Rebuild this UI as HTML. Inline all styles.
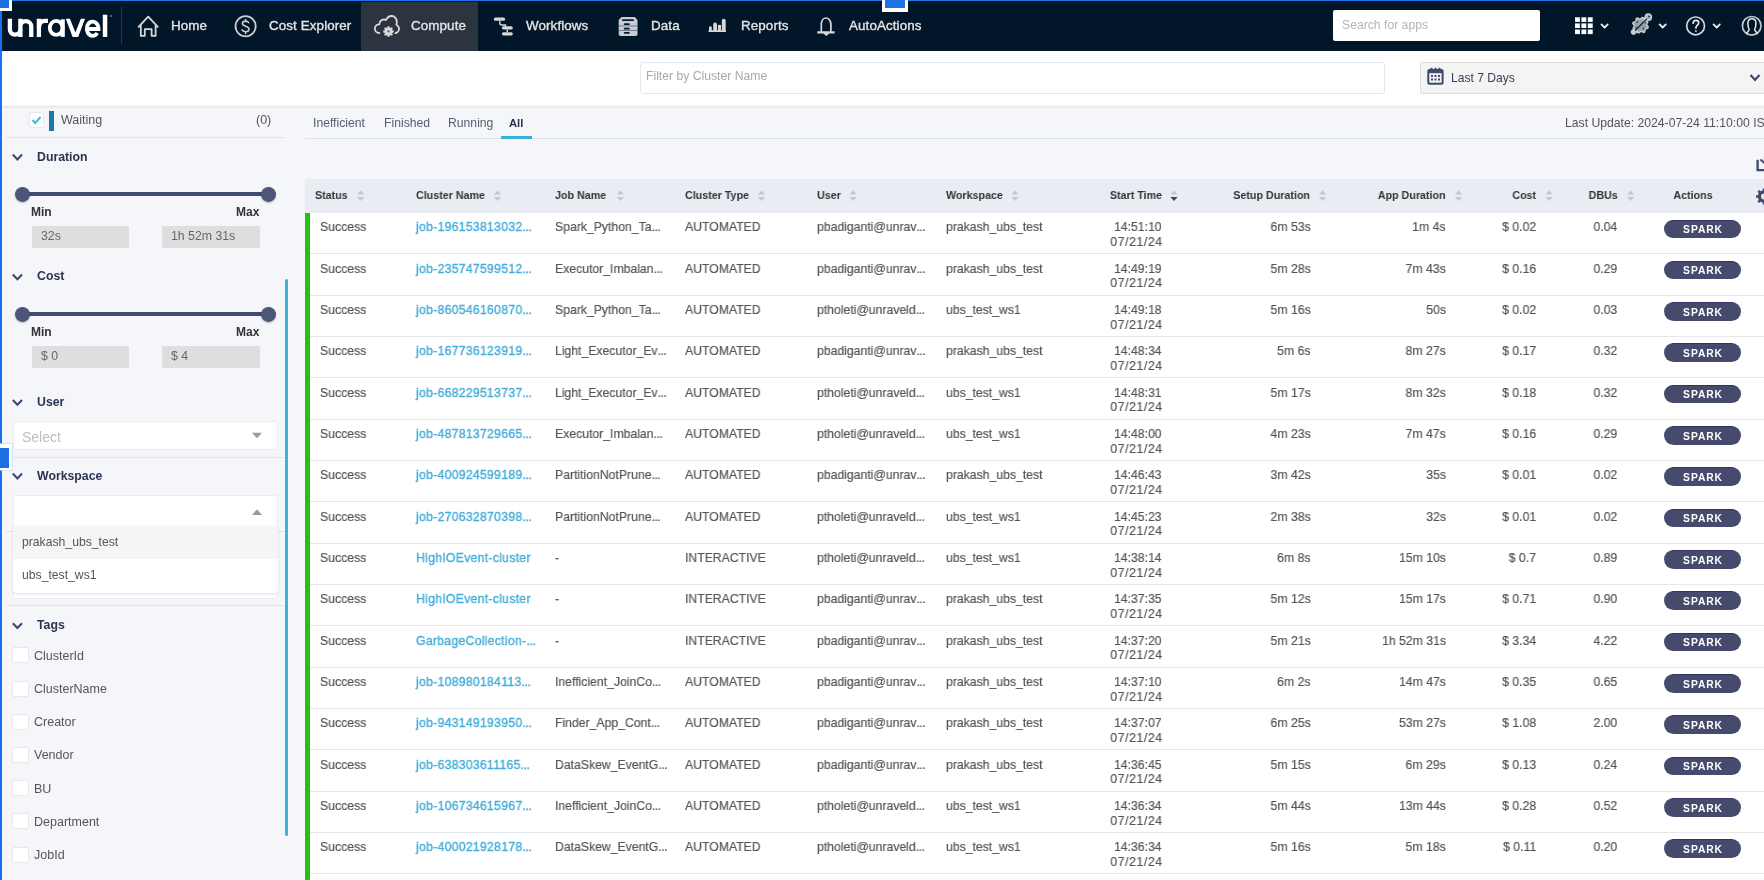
<!DOCTYPE html>
<html><head><meta charset="utf-8">
<style>
html,body{margin:0;padding:0;}
body{width:1764px;height:880px;overflow:hidden;position:relative;background:#f4f6fa;font-family:"Liberation Sans", sans-serif;}
.t{position:absolute;white-space:nowrap;line-height:20px;will-change:transform;}
.r{position:absolute;}
svg{position:absolute;overflow:visible;}
</style></head><body>
<div class="r" style="left:0.00px;top:0.00px;width:1764.00px;height:50.60px;background:#021629;"></div>
<div class="r" style="left:361.00px;top:1.50px;width:117.00px;height:49.10px;background:#2c3440;"></div>
<div class="r" style="left:0.00px;top:0.00px;width:1764.00px;height:1.20px;background:#1e74ea;"></div>
<svg style="left:0;top:0" width="130" height="51"><g fill="none" stroke="#fff" stroke-width="4.3">
<path d="M9.9,18.7 V29.5 A5.2,5.2 0 0 0 20.3,29.5"/>
<path d="M20.4,18.7 V36.9 M20.4,26.5 A5.42,5.42 0 0 1 31.25,26.5 V36.9"/>
<path d="M38.9,18.7 V36.9 M38.9,28.5 C38.9,23.3 41.3,20.9 45,20.9 H48"/>
</g>
<g fill="none" stroke="#fff" stroke-width="3.8">
<ellipse cx="56.2" cy="27.9" rx="6.4" ry="7"/>
<path d="M86.6,29 H98.5 A5.85,7.15 0 1 0 97.3,33.1"/>
</g>
<g fill="#fff">
<rect x="60.6" y="19.3" width="4.2" height="17.6"/>
<polygon points="65.8,18.8 69.9,18.8 75.4,32.6 80.9,18.8 85,18.8 78.2,36.9 72.6,36.9"/>
<rect x="102.8" y="14.7" width="4.5" height="22.2"/>
</g><circle cx="111" cy="16" r="0.9" fill="#7a8899"/></svg>
<div class="r" style="left:121.00px;top:7.00px;width:1.00px;height:37.00px;background:#2a3647;"></div>
<div class="t" style="left:171.40px;top:15.56px;font-size:13.4px;color:#e4e4e4;font-weight:400;-webkit-text-stroke:0.35px #e4e4e4;letter-spacing:0.1px;">Home</div>
<div class="t" style="left:269.00px;top:15.56px;font-size:13.4px;color:#e4e4e4;font-weight:400;-webkit-text-stroke:0.35px #e4e4e4;letter-spacing:0.1px;">Cost Explorer</div>
<div class="t" style="left:410.70px;top:15.56px;font-size:13.4px;color:#e4e4e4;font-weight:400;-webkit-text-stroke:0.35px #e4e4e4;letter-spacing:0.1px;">Compute</div>
<div class="t" style="left:526.40px;top:15.56px;font-size:13.4px;color:#e4e4e4;font-weight:400;-webkit-text-stroke:0.35px #e4e4e4;letter-spacing:0.1px;">Workflows</div>
<div class="t" style="left:651.00px;top:15.56px;font-size:13.4px;color:#e4e4e4;font-weight:400;-webkit-text-stroke:0.35px #e4e4e4;letter-spacing:0.1px;">Data</div>
<div class="t" style="left:740.60px;top:15.56px;font-size:13.4px;color:#e4e4e4;font-weight:400;-webkit-text-stroke:0.35px #e4e4e4;letter-spacing:0.1px;">Reports</div>
<div class="t" style="left:849.00px;top:15.56px;font-size:13.4px;color:#e4e4e4;font-weight:400;-webkit-text-stroke:0.35px #e4e4e4;letter-spacing:0.1px;">AutoActions</div>
<svg style="left:0;top:0" width="1764" height="51"><g fill="none" stroke="#d8d8d8" stroke-width="1.8" stroke-linejoin="round" stroke-linecap="round">
<path d="M138.6,26.8 L148.2,16.6 L157.8,26.8 M140.8,24.6 V35.8 H144.8 V29.2 H151.6 V35.8 H155.6 V24.6"/>
<circle cx="245.6" cy="26.2" r="10.1" stroke="#c8ccd2"/>
<path d="M248.6,22.6 C247.9,21.5 246.9,21.1 245.6,21.1 C243.7,21.1 242.4,22.1 242.4,23.6 C242.4,26.9 249,25.5 249,29 C249,30.6 247.5,31.7 245.6,31.7 C243.9,31.7 242.7,31 242.1,29.8 M245.6,19.6 V21.1 M245.6,31.7 V33.6" stroke="#c8ccd2" stroke-width="1.6"/>
<path d="M379.3,33 C376.6,33 374.9,31 374.9,28.6 C374.9,26 377,24.2 379.4,24.4 C379.3,21.6 381.3,19.5 383.8,19.5 C384.6,19.5 385.4,19.7 386,20.1 C387,17.6 389.2,16 391.5,16 C394.7,16 397,18.7 396.8,22.4 C396.8,23.2 396.6,24 396.3,24.7 C398,25.5 399,27 399,28.8 C399,31.1 397.2,33 394.8,33"/>
</g>
<g fill="#d8d8d8" stroke="#2c3440" stroke-width="1.2">
<path d="M387.2,25.6 h2.6 l0.5,1.6 l1.5,-0.8 l1.8,1.8 l-0.8,1.5 l1.6,0.5 v2.6 l-1.6,0.5 l0.8,1.5 l-1.8,1.8 l-1.5,-0.8 l-0.5,1.6 h-2.6 l-0.5,-1.6 l-1.5,0.8 l-1.8,-1.8 l0.8,-1.5 l-1.6,-0.5 v-2.6 l1.6,-0.5 l-0.8,-1.5 l1.8,-1.8 l1.5,0.8 z"/>
</g>
<circle cx="388.5" cy="31.3" r="1.1" fill="#555"/>
<g fill="none" stroke="#d8d8d8" stroke-width="3.3" stroke-linecap="round">
<path d="M495.5,19.2 H503.5 M503.5,27.8 H511.2 M503.5,33.8 H511.2"/>
</g>
<g fill="none" stroke="#d8d8d8" stroke-width="1.4">
<path d="M499.8,21 V23 C499.8,24.3 500.8,25 502,25 H505.5 V27 M507.3,29.5 V32"/>
</g>
<g fill="#c9ccd2">
<path d="M621.5,16.9 H634.7 L637.5,20 V34.3 C637.5,35.3 636.7,35.9 635.7,35.9 H620.5 C619.5,35.9 618.7,35.3 618.7,34.3 V20 Z"/>
</g>
<g fill="#0a1a2c">
<rect x="622" y="19.3" width="12" height="1.8" rx="0.9"/>
<rect x="623.8" y="23.3" width="6" height="1.7" rx="0.85"/>
<rect x="623.8" y="27.8" width="6" height="1.7" rx="0.85"/>
<rect x="623.8" y="32" width="6" height="1.7" rx="0.85"/>
</g>
<g fill="#505a68"><rect x="618.7" y="25.6" width="18.8" height="0.7"/><rect x="618.7" y="30.2" width="18.8" height="0.7"/></g>
<g fill="#d8d8d8">
<rect x="708.5" y="30.2" width="17.5" height="1.8" rx="0.5"/>
<rect x="709" y="26.3" width="2.8" height="5" rx="1.4"/>
<rect x="713.2" y="22.5" width="3.8" height="9" rx="1.9"/>
<rect x="717.9" y="24.9" width="3.1" height="6"/>
<rect x="721.8" y="18.8" width="3.9" height="12.5" rx="1.9"/>
</g>
<g fill="none" stroke="#d8d8d8" stroke-width="1.7" stroke-linejoin="round">
<path d="M821.3,32 V24.5 C821.3,20.3 823.6,18 826,18 C828.4,18 830.9,20.3 830.9,24.5 V32"/>
</g>
<g fill="#d8d8d8">
<path d="M817.3,31.2 H834.6 V33.5 H829.2 L826.3,35.9 L823.4,33.5 H817.3 Z"/>
</g>
</svg>
<div class="r" style="left:1333.20px;top:9.80px;width:207.20px;height:31.00px;background:#fff;border-radius:2px;"></div>
<div class="t" style="left:1342.40px;top:15.07px;font-size:12.2px;color:#b5b5b5;font-weight:400;">Search for apps</div>
<svg style="left:0;top:0" width="1764" height="51"><g fill="#fff"><rect x="1575.0" y="17.3" width="4.9" height="4.6"/><rect x="1581.4" y="17.3" width="4.9" height="4.6"/><rect x="1587.8" y="17.3" width="4.9" height="4.6"/><rect x="1575.0" y="23.4" width="4.9" height="4.6"/><rect x="1581.4" y="23.4" width="4.9" height="4.6"/><rect x="1587.8" y="23.4" width="4.9" height="4.6"/><rect x="1575.0" y="29.5" width="4.9" height="4.6"/><rect x="1581.4" y="29.5" width="4.9" height="4.6"/><rect x="1587.8" y="29.5" width="4.9" height="4.6"/></g>
<g fill="none" stroke="#e8e8e8" stroke-width="1.9" stroke-linecap="round" stroke-linejoin="round">
<path d="M1601.5,24.4 L1604.6,27.5 L1607.7,24.4"/>
<path d="M1659.6,24.4 L1662.7,27.5 L1665.8,24.4"/>
<path d="M1713.6,24.4 L1716.7,27.5 L1719.8,24.4"/>
<circle cx="1695.6" cy="25.9" r="8.9" stroke="#d4d7dc" stroke-width="1.7"/>
<path d="M1693.2,23.2 C1693.2,21.3 1694.4,20.3 1695.9,20.3 C1697.5,20.3 1698.7,21.3 1698.7,22.8 C1698.7,25 1695.9,25.3 1695.9,28" stroke-width="1.7"/>
<circle cx="1751.7" cy="25.8" r="9.3" stroke="#c4c8cf" stroke-width="1.7"/>
<path d="M1746.6,33.6 C1747.3,31.8 1749.2,30.6 1749.2,29.3 C1748,27.8 1747.9,25.5 1747.9,23.2 C1747.9,20.2 1749.6,18.7 1751.9,18.7 C1754.2,18.7 1755.9,20.2 1755.9,23.2 C1755.9,25.5 1755.8,27.8 1754.6,29.3 C1754.6,30.6 1756.5,31.8 1757.2,33.6" stroke-width="1.5"/>
</g>
<circle cx="1695.9" cy="30.9" r="1" fill="#c8ccd2"/>
<path d="M1633.5,32 L1648.5,17" stroke="#b9bdc6" stroke-width="5.5" stroke-linecap="round"/>
<path d="M1648.24,26.77 L1647.79,28.25 L1645.73,28.72 L1644.94,29.67 L1644.86,31.78 L1643.50,32.51 L1641.71,31.38 L1640.48,31.50 L1638.93,32.94 L1637.45,32.49 L1636.98,30.43 L1636.03,29.64 L1633.92,29.56 L1633.19,28.20 L1634.32,26.41 L1634.20,25.18 L1632.76,23.63 L1633.21,22.15 L1635.27,21.68 L1636.06,20.73 L1636.14,18.62 L1637.50,17.89 L1639.29,19.02 L1640.52,18.90 L1642.07,17.46 L1643.55,17.91 L1644.02,19.97 L1644.97,20.76 L1647.08,20.84 L1647.81,22.20 L1646.68,23.99 L1646.80,25.22 Z" fill="#9aa0aa" stroke="#c8ccd4" stroke-width="1.4" stroke-linejoin="round"/>
<circle cx="1648.3" cy="17.2" r="3.2" fill="#aeb3bc" stroke="#c8ccd4" stroke-width="1.3"/>
<circle cx="1633.6" cy="32" r="2.3" fill="#c8ccd4"/>
<g fill="#2a3a4e"><circle cx="1637" cy="22" r="0.9"/><circle cx="1643.5" cy="28.5" r="0.9"/><circle cx="1645.5" cy="23" r="0.8"/><circle cx="1636" cy="27.5" r="0.8"/><circle cx="1649" cy="16.5" r="1"/></g>
<path d="M1635.2,30.5 L1646.8,18.8" stroke="#0a1a2c" stroke-width="1.2"/>
</svg>
<div class="r" style="left:0.00px;top:50.60px;width:1764.00px;height:54.90px;background:#fff;"></div>
<div class="r" style="left:0.00px;top:105.50px;width:1764.00px;height:2.00px;background:#e9ebf0;"></div>
<div class="r" style="left:640.00px;top:62.20px;width:745.00px;height:31.50px;background:#fff;box-sizing:border-box;border:1px solid #e4e8f0;border-radius:3px;"></div>
<div class="t" style="left:646.00px;top:66.07px;font-size:12.2px;color:#a9a9a9;font-weight:400;">Filter by Cluster Name</div>
<div class="r" style="left:1419.60px;top:62.40px;width:360.40px;height:31.20px;background:#f4f4f4;box-sizing:border-box;border:1px solid #dcdcdc;border-radius:2px;"></div>
<svg style="left:0;top:0" width="1764" height="100">
<g fill="#3f4b6a"><rect x="1427.3" y="69" width="16.3" height="15.7" rx="2"/></g>
<g fill="#f4f4f4"><rect x="1429.3" y="73.2" width="12.3" height="9.5"/></g>
<g fill="#3f4b6a"><rect x="1430.5" y="67.8" width="2" height="2.5"/><rect x="1434.5" y="67.8" width="2" height="2.5"/><rect x="1438.5" y="67.8" width="2" height="2.5"/>
<rect x="1431" y="75" width="2" height="2"/><rect x="1434.5" y="75" width="2" height="2"/><rect x="1438" y="75" width="2" height="2"/>
<rect x="1431" y="78.5" width="2" height="2"/><rect x="1434.5" y="78.5" width="2" height="2"/><rect x="1438" y="78.5" width="2" height="2"/></g>
<path d="M1750.5,75 L1755,79.8 L1759.5,75" fill="none" stroke="#3f4b6a" stroke-width="2.2"/>
</svg>
<div class="t" style="left:1451.40px;top:67.81px;font-size:12.1px;color:#3b4057;font-weight:400;">Last 7 Days</div>
<div class="r" style="left:0.00px;top:0.00px;width:2.20px;height:880.00px;background:#1b6ff0;"></div>
<div class="r" style="left:28.60px;top:112.30px;width:15.20px;height:15.90px;background:#fff;box-sizing:border-box;border:1px solid #e8e8ec;border-radius:2px;"></div>
<svg style="left:0;top:0" width="60" height="140"><path d="M32.5,120 L35.2,123 L40.6,117" fill="none" stroke="#4cb6da" stroke-width="2"/></svg>
<div class="r" style="left:48.70px;top:111.10px;width:5.10px;height:20.30px;background:#1a7ab0;"></div>
<div class="t" style="left:60.50px;top:109.87px;font-size:12.5px;color:#555;font-weight:400;">Waiting</div>
<div class="t" style="right:1492.90px;top:110.37px;font-size:12.5px;color:#555;font-weight:400;">(0)</div>
<div class="r" style="left:6.40px;top:137.00px;width:278.60px;height:1.00px;background:#e2e4e9;"></div>
<svg style="left:0;top:0" width="30" height="880"><path d="M12.8,154.6 L17.4,159.4 L22,154.6" fill="none" stroke="#3d4a6b" stroke-width="2.1"/></svg>
<div class="t" style="left:37.00px;top:146.64px;font-size:12.3px;color:#2d3352;font-weight:700;">Duration</div>
<div class="r" style="left:23.00px;top:192.40px;width:245.50px;height:3.70px;background:#414a72;"></div>
<div class="r" style="left:15.40px;top:186.90px;width:14.80px;height:14.80px;background:#4d5578;border-radius:50%;box-shadow:0 1px 2px rgba(0,0,0,.25);"></div>
<div class="r" style="left:261.10px;top:186.90px;width:14.80px;height:14.80px;background:#4d5578;border-radius:50%;box-shadow:0 1px 2px rgba(0,0,0,.25);"></div>
<div class="t" style="left:31.30px;top:202.34px;font-size:12px;color:#333;font-weight:700;">Min</div>
<div class="t" style="right:1504.60px;top:202.34px;font-size:12px;color:#333;font-weight:700;">Max</div>
<div class="r" style="left:31.60px;top:226.00px;width:97.10px;height:21.50px;background:#dedede;border-radius:1px;"></div>
<div class="r" style="left:162.30px;top:226.00px;width:97.30px;height:21.50px;background:#dedede;border-radius:1px;"></div>
<div class="t" style="left:40.70px;top:226.24px;font-size:12.3px;color:#666;font-weight:400;">32s</div>
<div class="t" style="left:171.00px;top:226.24px;font-size:12.3px;color:#666;font-weight:400;">1h 52m 31s</div>
<svg style="left:0;top:0" width="30" height="880"><path d="M12.8,274.4 L17.4,279.2 L22,274.4" fill="none" stroke="#3d4a6b" stroke-width="2.1"/></svg>
<div class="t" style="left:37.00px;top:266.44px;font-size:12.3px;color:#2d3352;font-weight:700;">Cost</div>
<div class="r" style="left:23.00px;top:312.40px;width:245.50px;height:3.70px;background:#414a72;"></div>
<div class="r" style="left:15.40px;top:306.90px;width:14.80px;height:14.80px;background:#4d5578;border-radius:50%;box-shadow:0 1px 2px rgba(0,0,0,.25);"></div>
<div class="r" style="left:261.10px;top:306.90px;width:14.80px;height:14.80px;background:#4d5578;border-radius:50%;box-shadow:0 1px 2px rgba(0,0,0,.25);"></div>
<div class="t" style="left:31.30px;top:322.24px;font-size:12px;color:#333;font-weight:700;">Min</div>
<div class="t" style="right:1504.60px;top:322.24px;font-size:12px;color:#333;font-weight:700;">Max</div>
<div class="r" style="left:31.60px;top:346.00px;width:97.10px;height:21.50px;background:#dedede;border-radius:1px;"></div>
<div class="r" style="left:162.30px;top:346.00px;width:97.30px;height:21.50px;background:#dedede;border-radius:1px;"></div>
<div class="t" style="left:40.70px;top:346.24px;font-size:12.3px;color:#666;font-weight:400;">$ 0</div>
<div class="t" style="left:171.00px;top:346.24px;font-size:12.3px;color:#666;font-weight:400;">$ 4</div>
<svg style="left:0;top:0" width="30" height="880"><path d="M12.8,400.0 L17.4,404.8 L22,400.0" fill="none" stroke="#3d4a6b" stroke-width="2.1"/></svg>
<div class="t" style="left:37.00px;top:392.14px;font-size:12.3px;color:#2d3352;font-weight:700;">User</div>
<div class="r" style="left:12.70px;top:420.90px;width:265.70px;height:29.60px;background:#fff;box-sizing:border-box;border:1px solid #ececf0;border-radius:2px;"></div>
<div class="t" style="left:21.80px;top:427.35px;font-size:14px;color:#bdbdbd;font-weight:400;">Select</div>
<div class="r" style="left:6.00px;top:457.00px;width:279.00px;height:1.00px;background:#e2e4e9;"></div>
<svg style="left:0;top:0" width="30" height="880"><path d="M12.8,473.6 L17.4,478.4 L22,473.6" fill="none" stroke="#3d4a6b" stroke-width="2.1"/></svg>
<div class="t" style="left:37.00px;top:465.74px;font-size:12.3px;color:#2d3352;font-weight:700;">Workspace</div>
<div class="r" style="left:6.00px;top:531.00px;width:279.00px;height:1.00px;background:#e2e4e9;"></div>
<div class="r" style="left:12.70px;top:494.50px;width:265.70px;height:104.50px;background:#fff;box-sizing:border-box;border:1px solid #ececf0;border-radius:2px;"></div>
<svg style="left:0;top:0" width="300" height="880"><path d="M252,432.7 H262 L257,438.3 Z" fill="#9a9a9a"/><path d="M252,515 H262 L257,509.3 Z" fill="#9a9a9a"/></svg>
<div class="r" style="left:13.00px;top:525.80px;width:265.40px;height:66.80px;background:#fff;border-radius:0 0 4px 4px;box-shadow:0 1px 3px rgba(0,0,0,.12);"></div>
<div class="r" style="left:13.00px;top:525.80px;width:265.40px;height:33.40px;background:#f4f5f7;"></div>
<div class="t" style="left:21.70px;top:532.37px;font-size:12.2px;color:#555;font-weight:400;">prakash_ubs_test</div>
<div class="t" style="left:21.70px;top:565.47px;font-size:12.2px;color:#555;font-weight:400;">ubs_test_ws1</div>
<div class="r" style="left:5.50px;top:604.50px;width:279.50px;height:1.30px;background:#e2e4e9;"></div>
<svg style="left:0;top:0" width="30" height="880"><path d="M12.8,623.2 L17.4,628.0 L22,623.2" fill="none" stroke="#3d4a6b" stroke-width="2.1"/></svg>
<div class="t" style="left:37.00px;top:615.24px;font-size:12.3px;color:#2d3352;font-weight:700;">Tags</div>
<div class="r" style="left:12.30px;top:647.30px;width:16.30px;height:16.00px;background:#fff;box-sizing:border-box;border:1px solid #e8e8ec;border-radius:2px;"></div>
<div class="t" style="left:34.40px;top:645.87px;font-size:12.5px;color:#555;font-weight:400;">ClusterId</div>
<div class="r" style="left:12.30px;top:680.50px;width:16.30px;height:16.00px;background:#fff;box-sizing:border-box;border:1px solid #e8e8ec;border-radius:2px;"></div>
<div class="t" style="left:34.40px;top:679.07px;font-size:12.5px;color:#555;font-weight:400;">ClusterName</div>
<div class="r" style="left:12.30px;top:713.70px;width:16.30px;height:16.00px;background:#fff;box-sizing:border-box;border:1px solid #e8e8ec;border-radius:2px;"></div>
<div class="t" style="left:34.40px;top:712.27px;font-size:12.5px;color:#555;font-weight:400;">Creator</div>
<div class="r" style="left:12.30px;top:746.90px;width:16.30px;height:16.00px;background:#fff;box-sizing:border-box;border:1px solid #e8e8ec;border-radius:2px;"></div>
<div class="t" style="left:34.40px;top:745.47px;font-size:12.5px;color:#555;font-weight:400;">Vendor</div>
<div class="r" style="left:12.30px;top:780.10px;width:16.30px;height:16.00px;background:#fff;box-sizing:border-box;border:1px solid #e8e8ec;border-radius:2px;"></div>
<div class="t" style="left:34.40px;top:778.67px;font-size:12.5px;color:#555;font-weight:400;">BU</div>
<div class="r" style="left:12.30px;top:813.30px;width:16.30px;height:16.00px;background:#fff;box-sizing:border-box;border:1px solid #e8e8ec;border-radius:2px;"></div>
<div class="t" style="left:34.40px;top:811.87px;font-size:12.5px;color:#555;font-weight:400;">Department</div>
<div class="r" style="left:12.30px;top:846.50px;width:16.30px;height:16.00px;background:#fff;box-sizing:border-box;border:1px solid #e8e8ec;border-radius:2px;"></div>
<div class="t" style="left:34.40px;top:845.07px;font-size:12.5px;color:#555;font-weight:400;">JobId</div>
<div class="r" style="left:12.30px;top:879.70px;width:16.30px;height:16.00px;background:#fff;box-sizing:border-box;border:1px solid #e8e8ec;border-radius:2px;"></div>
<div class="r" style="left:284.70px;top:278.70px;width:3.40px;height:557.60px;background:#3bb4d8;border-radius:2px;"></div>
<div class="t" style="left:313.00px;top:113.07px;font-size:12.2px;color:#585d6e;font-weight:400;">Inefficient</div>
<div class="t" style="left:384.40px;top:113.07px;font-size:12.2px;color:#585d6e;font-weight:400;">Finished</div>
<div class="t" style="left:448.00px;top:113.07px;font-size:12.2px;color:#585d6e;font-weight:400;">Running</div>
<div class="t" style="left:509.40px;top:113.42px;font-size:11.2px;color:#2a3050;font-weight:700;">All</div>
<div class="r" style="left:304.60px;top:137.80px;width:1459.40px;height:1.00px;background:#dfe2e8;"></div>
<div class="r" style="left:500.60px;top:136.20px;width:31.40px;height:2.50px;background:#3ab0d8;"></div>
<div class="t" style="left:1565.00px;top:113.07px;font-size:12.2px;color:#555;font-weight:400;">Last Update: 2024-07-24 11:10:00 IST</div>
<svg style="left:0;top:0" width="1764" height="220"><path d="M1757.6,159.8 V170.2 H1770" fill="none" stroke="#3d4a6b" stroke-width="2.3"/><path d="M1760.5,159.5 L1766,164.5" stroke="#3d4a6b" stroke-width="2"/><path d="M1764.5,156 V158.5" stroke="#3d4a6b" stroke-width="1.2"/></svg>
<div class="r" style="left:305.00px;top:179.20px;width:1459.00px;height:33.80px;background:#e9ecf3;"></div>
<div class="t" style="left:315.20px;top:184.88px;font-size:11.3px;color:#333;font-weight:700;transform:scaleX(0.947);transform-origin:left 50%;">Status</div>
<svg style="left:0;top:0" width="1764" height="220"><path d="M357,194.5 L360.7,190.5 L364.4,194.5 Z" fill="#c4c7ce"/><path d="M357,197 L360.7,201 L364.4,197 Z" fill="#c4c7ce"/></svg>
<div class="t" style="left:415.80px;top:184.88px;font-size:11.3px;color:#333;font-weight:700;transform:scaleX(0.947);transform-origin:left 50%;">Cluster Name</div>
<svg style="left:0;top:0" width="1764" height="220"><path d="M493.8,194.5 L497.5,190.5 L501.2,194.5 Z" fill="#c4c7ce"/><path d="M493.8,197 L497.5,201 L501.2,197 Z" fill="#c4c7ce"/></svg>
<div class="t" style="left:555.40px;top:184.88px;font-size:11.3px;color:#333;font-weight:700;transform:scaleX(0.947);transform-origin:left 50%;">Job Name</div>
<svg style="left:0;top:0" width="1764" height="220"><path d="M616.7,194.5 L620.4000000000001,190.5 L624.1,194.5 Z" fill="#c4c7ce"/><path d="M616.7,197 L620.4000000000001,201 L624.1,197 Z" fill="#c4c7ce"/></svg>
<div class="t" style="left:684.60px;top:184.88px;font-size:11.3px;color:#333;font-weight:700;transform:scaleX(0.947);transform-origin:left 50%;">Cluster Type</div>
<svg style="left:0;top:0" width="1764" height="220"><path d="M757.8,194.5 L761.5,190.5 L765.1999999999999,194.5 Z" fill="#c4c7ce"/><path d="M757.8,197 L761.5,201 L765.1999999999999,197 Z" fill="#c4c7ce"/></svg>
<div class="t" style="left:816.70px;top:184.88px;font-size:11.3px;color:#333;font-weight:700;transform:scaleX(0.947);transform-origin:left 50%;">User</div>
<svg style="left:0;top:0" width="1764" height="220"><path d="M849.4,194.5 L853.1,190.5 L856.8,194.5 Z" fill="#c4c7ce"/><path d="M849.4,197 L853.1,201 L856.8,197 Z" fill="#c4c7ce"/></svg>
<div class="t" style="left:945.70px;top:184.88px;font-size:11.3px;color:#333;font-weight:700;transform:scaleX(0.947);transform-origin:left 50%;">Workspace</div>
<svg style="left:0;top:0" width="1764" height="220"><path d="M1011.3,194.5 L1015.0,190.5 L1018.6999999999999,194.5 Z" fill="#c4c7ce"/><path d="M1011.3,197 L1015.0,201 L1018.6999999999999,197 Z" fill="#c4c7ce"/></svg>
<div class="t" style="right:602.40px;top:184.88px;font-size:11.3px;color:#333;font-weight:700;transform:scaleX(0.947);transform-origin:right 50%;">Start Time</div>
<svg style="left:0;top:0" width="1764" height="220"><path d="M1170.3,194.5 L1174.0,190.5 L1177.7,194.5 Z" fill="#c4c7ce"/><path d="M1170.3,197 L1174.0,201 L1177.7,197 Z" fill="#3d4a6b"/></svg>
<div class="t" style="right:453.60px;top:184.88px;font-size:11.3px;color:#333;font-weight:700;transform:scaleX(0.947);transform-origin:right 50%;">Setup Duration</div>
<svg style="left:0;top:0" width="1764" height="220"><path d="M1319,194.5 L1322.7,190.5 L1326.4,194.5 Z" fill="#c4c7ce"/><path d="M1319,197 L1322.7,201 L1326.4,197 Z" fill="#c4c7ce"/></svg>
<div class="t" style="right:318.30px;top:184.88px;font-size:11.3px;color:#333;font-weight:700;transform:scaleX(0.947);transform-origin:right 50%;">App Duration</div>
<svg style="left:0;top:0" width="1764" height="220"><path d="M1455,194.5 L1458.7,190.5 L1462.4,194.5 Z" fill="#c4c7ce"/><path d="M1455,197 L1458.7,201 L1462.4,197 Z" fill="#c4c7ce"/></svg>
<div class="t" style="right:228.10px;top:184.88px;font-size:11.3px;color:#333;font-weight:700;transform:scaleX(0.947);transform-origin:right 50%;">Cost</div>
<svg style="left:0;top:0" width="1764" height="220"><path d="M1545.4,194.5 L1549.1000000000001,190.5 L1552.8000000000002,194.5 Z" fill="#c4c7ce"/><path d="M1545.4,197 L1549.1000000000001,201 L1552.8000000000002,197 Z" fill="#c4c7ce"/></svg>
<div class="t" style="right:146.30px;top:184.88px;font-size:11.3px;color:#333;font-weight:700;transform:scaleX(0.947);transform-origin:right 50%;">DBUs</div>
<svg style="left:0;top:0" width="1764" height="220"><path d="M1627,194.5 L1630.7,190.5 L1634.4,194.5 Z" fill="#c4c7ce"/><path d="M1627,197 L1630.7,201 L1634.4,197 Z" fill="#c4c7ce"/></svg>
<div class="t" style="left:1392.70px;width:600px;text-align:center;top:184.88px;font-size:11.3px;color:#333;font-weight:700;transform:scaleX(0.947);transform-origin:center 50%;">Actions</div>
<svg style="left:0;top:0" width="1764" height="220"><g fill="#3d4a6b"><circle cx="1764" cy="196.5" r="6.2"/></g><g fill="none" stroke="#3d4a6b" stroke-width="2.6"><path d="M1756,196.5 H1772 M1758.3,190.8 L1769.7,202.2 M1758.3,202.2 L1769.7,190.8 M1764,188.5 V204.5"/></g><circle cx="1764" cy="196.5" r="3" fill="#e9ecf3"/></svg>
<div class="r" style="left:305.00px;top:213.00px;width:1459.00px;height:41.33px;background:#fff;box-sizing:border-box;border-bottom:1.4px solid #e6e7eb;"></div>
<div class="r" style="left:305.00px;top:213.00px;width:5.30px;height:41.33px;background:#22c40e;"></div>
<div class="t" style="left:320.40px;top:217.40px;font-size:13px;color:#555;font-weight:400;-webkit-text-stroke:0.2px #555;transform:scaleX(0.94);transform-origin:left 50%;">Success</div>
<div class="t" style="left:415.80px;top:217.40px;font-size:13px;color:#42acd9;font-weight:400;-webkit-text-stroke:0.35px #42acd9;letter-spacing:0.3px;transform:scaleX(0.94);transform-origin:left 50%;">job-196153813032<span style="letter-spacing:-0.5px">...</span></div>
<div class="t" style="left:555.40px;top:217.40px;font-size:13px;color:#555;font-weight:400;-webkit-text-stroke:0.2px #555;transform:scaleX(0.94);transform-origin:left 50%;">Spark_Python_Ta<span style="letter-spacing:-0.5px">...</span></div>
<div class="t" style="left:684.60px;top:217.40px;font-size:13px;color:#555;font-weight:400;-webkit-text-stroke:0.2px #555;transform:scaleX(0.94);transform-origin:left 50%;">AUTOMATED</div>
<div class="t" style="left:816.70px;top:217.40px;font-size:13px;color:#555;font-weight:400;-webkit-text-stroke:0.2px #555;transform:scaleX(0.94);transform-origin:left 50%;">pbadiganti@unrav<span style="letter-spacing:-0.5px">...</span></div>
<div class="t" style="left:945.70px;top:217.40px;font-size:13px;color:#555;font-weight:400;-webkit-text-stroke:0.2px #555;transform:scaleX(0.94);transform-origin:left 50%;">prakash_ubs_test</div>
<div class="t" style="right:602.40px;top:217.40px;font-size:13px;color:#555;font-weight:400;-webkit-text-stroke:0.2px #555;transform:scaleX(0.94);transform-origin:right 50%;">14:51:10</div>
<div class="t" style="right:601.80px;top:231.90px;font-size:13px;color:#555;font-weight:400;letter-spacing:0.63px;-webkit-text-stroke:0.2px #555;transform:scaleX(0.94);transform-origin:right 50%;">07/21/24</div>
<div class="t" style="right:453.60px;top:217.40px;font-size:13px;color:#555;font-weight:400;-webkit-text-stroke:0.2px #555;transform:scaleX(0.94);transform-origin:right 50%;">6m 53s</div>
<div class="t" style="right:318.30px;top:217.40px;font-size:13px;color:#555;font-weight:400;-webkit-text-stroke:0.2px #555;transform:scaleX(0.94);transform-origin:right 50%;">1m 4s</div>
<div class="t" style="right:228.10px;top:217.40px;font-size:13px;color:#555;font-weight:400;-webkit-text-stroke:0.2px #555;transform:scaleX(0.94);transform-origin:right 50%;">$ 0.02</div>
<div class="t" style="right:146.30px;top:217.40px;font-size:13px;color:#555;font-weight:400;-webkit-text-stroke:0.2px #555;transform:scaleX(0.94);transform-origin:right 50%;">0.04</div>
<div class="r" style="left:1664.00px;top:219.50px;width:77.30px;height:18.50px;background:#464b6e;border-radius:9.5px;box-sizing:border-box;border-top:1px solid #2f3560;"></div>
<div class="t" style="left:1402.60px;width:600px;text-align:center;top:219.93px;font-size:10.3px;color:#fff;font-weight:700;letter-spacing:0.9px;">SPARK</div>
<div class="r" style="left:305.00px;top:254.33px;width:1459.00px;height:41.33px;background:#fff;box-sizing:border-box;border-bottom:1.4px solid #e6e7eb;"></div>
<div class="r" style="left:305.00px;top:254.33px;width:5.30px;height:41.33px;background:#22c40e;"></div>
<div class="t" style="left:320.40px;top:258.73px;font-size:13px;color:#555;font-weight:400;-webkit-text-stroke:0.2px #555;transform:scaleX(0.94);transform-origin:left 50%;">Success</div>
<div class="t" style="left:415.80px;top:258.73px;font-size:13px;color:#42acd9;font-weight:400;-webkit-text-stroke:0.35px #42acd9;letter-spacing:0.3px;transform:scaleX(0.94);transform-origin:left 50%;">job-235747599512<span style="letter-spacing:-0.5px">...</span></div>
<div class="t" style="left:555.40px;top:258.73px;font-size:13px;color:#555;font-weight:400;-webkit-text-stroke:0.2px #555;transform:scaleX(0.94);transform-origin:left 50%;">Executor_Imbalan<span style="letter-spacing:-0.5px">...</span></div>
<div class="t" style="left:684.60px;top:258.73px;font-size:13px;color:#555;font-weight:400;-webkit-text-stroke:0.2px #555;transform:scaleX(0.94);transform-origin:left 50%;">AUTOMATED</div>
<div class="t" style="left:816.70px;top:258.73px;font-size:13px;color:#555;font-weight:400;-webkit-text-stroke:0.2px #555;transform:scaleX(0.94);transform-origin:left 50%;">pbadiganti@unrav<span style="letter-spacing:-0.5px">...</span></div>
<div class="t" style="left:945.70px;top:258.73px;font-size:13px;color:#555;font-weight:400;-webkit-text-stroke:0.2px #555;transform:scaleX(0.94);transform-origin:left 50%;">prakash_ubs_test</div>
<div class="t" style="right:602.40px;top:258.73px;font-size:13px;color:#555;font-weight:400;-webkit-text-stroke:0.2px #555;transform:scaleX(0.94);transform-origin:right 50%;">14:49:19</div>
<div class="t" style="right:601.80px;top:273.23px;font-size:13px;color:#555;font-weight:400;letter-spacing:0.63px;-webkit-text-stroke:0.2px #555;transform:scaleX(0.94);transform-origin:right 50%;">07/21/24</div>
<div class="t" style="right:453.60px;top:258.73px;font-size:13px;color:#555;font-weight:400;-webkit-text-stroke:0.2px #555;transform:scaleX(0.94);transform-origin:right 50%;">5m 28s</div>
<div class="t" style="right:318.30px;top:258.73px;font-size:13px;color:#555;font-weight:400;-webkit-text-stroke:0.2px #555;transform:scaleX(0.94);transform-origin:right 50%;">7m 43s</div>
<div class="t" style="right:228.10px;top:258.73px;font-size:13px;color:#555;font-weight:400;-webkit-text-stroke:0.2px #555;transform:scaleX(0.94);transform-origin:right 50%;">$ 0.16</div>
<div class="t" style="right:146.30px;top:258.73px;font-size:13px;color:#555;font-weight:400;-webkit-text-stroke:0.2px #555;transform:scaleX(0.94);transform-origin:right 50%;">0.29</div>
<div class="r" style="left:1664.00px;top:260.83px;width:77.30px;height:18.50px;background:#464b6e;border-radius:9.5px;box-sizing:border-box;border-top:1px solid #2f3560;"></div>
<div class="t" style="left:1402.60px;width:600px;text-align:center;top:261.26px;font-size:10.3px;color:#fff;font-weight:700;letter-spacing:0.9px;">SPARK</div>
<div class="r" style="left:305.00px;top:295.66px;width:1459.00px;height:41.33px;background:#fff;box-sizing:border-box;border-bottom:1.4px solid #e6e7eb;"></div>
<div class="r" style="left:305.00px;top:295.66px;width:5.30px;height:41.33px;background:#22c40e;"></div>
<div class="t" style="left:320.40px;top:300.06px;font-size:13px;color:#555;font-weight:400;-webkit-text-stroke:0.2px #555;transform:scaleX(0.94);transform-origin:left 50%;">Success</div>
<div class="t" style="left:415.80px;top:300.06px;font-size:13px;color:#42acd9;font-weight:400;-webkit-text-stroke:0.35px #42acd9;letter-spacing:0.3px;transform:scaleX(0.94);transform-origin:left 50%;">job-860546160870<span style="letter-spacing:-0.5px">...</span></div>
<div class="t" style="left:555.40px;top:300.06px;font-size:13px;color:#555;font-weight:400;-webkit-text-stroke:0.2px #555;transform:scaleX(0.94);transform-origin:left 50%;">Spark_Python_Ta<span style="letter-spacing:-0.5px">...</span></div>
<div class="t" style="left:684.60px;top:300.06px;font-size:13px;color:#555;font-weight:400;-webkit-text-stroke:0.2px #555;transform:scaleX(0.94);transform-origin:left 50%;">AUTOMATED</div>
<div class="t" style="left:816.70px;top:300.06px;font-size:13px;color:#555;font-weight:400;-webkit-text-stroke:0.2px #555;transform:scaleX(0.94);transform-origin:left 50%;">ptholeti@unraveld<span style="letter-spacing:-0.5px">...</span></div>
<div class="t" style="left:945.70px;top:300.06px;font-size:13px;color:#555;font-weight:400;-webkit-text-stroke:0.2px #555;transform:scaleX(0.94);transform-origin:left 50%;">ubs_test_ws1</div>
<div class="t" style="right:602.40px;top:300.06px;font-size:13px;color:#555;font-weight:400;-webkit-text-stroke:0.2px #555;transform:scaleX(0.94);transform-origin:right 50%;">14:49:18</div>
<div class="t" style="right:601.80px;top:314.56px;font-size:13px;color:#555;font-weight:400;letter-spacing:0.63px;-webkit-text-stroke:0.2px #555;transform:scaleX(0.94);transform-origin:right 50%;">07/21/24</div>
<div class="t" style="right:453.60px;top:300.06px;font-size:13px;color:#555;font-weight:400;-webkit-text-stroke:0.2px #555;transform:scaleX(0.94);transform-origin:right 50%;">5m 16s</div>
<div class="t" style="right:318.30px;top:300.06px;font-size:13px;color:#555;font-weight:400;-webkit-text-stroke:0.2px #555;transform:scaleX(0.94);transform-origin:right 50%;">50s</div>
<div class="t" style="right:228.10px;top:300.06px;font-size:13px;color:#555;font-weight:400;-webkit-text-stroke:0.2px #555;transform:scaleX(0.94);transform-origin:right 50%;">$ 0.02</div>
<div class="t" style="right:146.30px;top:300.06px;font-size:13px;color:#555;font-weight:400;-webkit-text-stroke:0.2px #555;transform:scaleX(0.94);transform-origin:right 50%;">0.03</div>
<div class="r" style="left:1664.00px;top:302.16px;width:77.30px;height:18.50px;background:#464b6e;border-radius:9.5px;box-sizing:border-box;border-top:1px solid #2f3560;"></div>
<div class="t" style="left:1402.60px;width:600px;text-align:center;top:302.59px;font-size:10.3px;color:#fff;font-weight:700;letter-spacing:0.9px;">SPARK</div>
<div class="r" style="left:305.00px;top:336.99px;width:1459.00px;height:41.33px;background:#fff;box-sizing:border-box;border-bottom:1.4px solid #e6e7eb;"></div>
<div class="r" style="left:305.00px;top:336.99px;width:5.30px;height:41.33px;background:#22c40e;"></div>
<div class="t" style="left:320.40px;top:341.39px;font-size:13px;color:#555;font-weight:400;-webkit-text-stroke:0.2px #555;transform:scaleX(0.94);transform-origin:left 50%;">Success</div>
<div class="t" style="left:415.80px;top:341.39px;font-size:13px;color:#42acd9;font-weight:400;-webkit-text-stroke:0.35px #42acd9;letter-spacing:0.3px;transform:scaleX(0.94);transform-origin:left 50%;">job-167736123919<span style="letter-spacing:-0.5px">...</span></div>
<div class="t" style="left:555.40px;top:341.39px;font-size:13px;color:#555;font-weight:400;-webkit-text-stroke:0.2px #555;transform:scaleX(0.94);transform-origin:left 50%;">Light_Executor_Ev<span style="letter-spacing:-0.5px">...</span></div>
<div class="t" style="left:684.60px;top:341.39px;font-size:13px;color:#555;font-weight:400;-webkit-text-stroke:0.2px #555;transform:scaleX(0.94);transform-origin:left 50%;">AUTOMATED</div>
<div class="t" style="left:816.70px;top:341.39px;font-size:13px;color:#555;font-weight:400;-webkit-text-stroke:0.2px #555;transform:scaleX(0.94);transform-origin:left 50%;">pbadiganti@unrav<span style="letter-spacing:-0.5px">...</span></div>
<div class="t" style="left:945.70px;top:341.39px;font-size:13px;color:#555;font-weight:400;-webkit-text-stroke:0.2px #555;transform:scaleX(0.94);transform-origin:left 50%;">prakash_ubs_test</div>
<div class="t" style="right:602.40px;top:341.39px;font-size:13px;color:#555;font-weight:400;-webkit-text-stroke:0.2px #555;transform:scaleX(0.94);transform-origin:right 50%;">14:48:34</div>
<div class="t" style="right:601.80px;top:355.89px;font-size:13px;color:#555;font-weight:400;letter-spacing:0.63px;-webkit-text-stroke:0.2px #555;transform:scaleX(0.94);transform-origin:right 50%;">07/21/24</div>
<div class="t" style="right:453.60px;top:341.39px;font-size:13px;color:#555;font-weight:400;-webkit-text-stroke:0.2px #555;transform:scaleX(0.94);transform-origin:right 50%;">5m 6s</div>
<div class="t" style="right:318.30px;top:341.39px;font-size:13px;color:#555;font-weight:400;-webkit-text-stroke:0.2px #555;transform:scaleX(0.94);transform-origin:right 50%;">8m 27s</div>
<div class="t" style="right:228.10px;top:341.39px;font-size:13px;color:#555;font-weight:400;-webkit-text-stroke:0.2px #555;transform:scaleX(0.94);transform-origin:right 50%;">$ 0.17</div>
<div class="t" style="right:146.30px;top:341.39px;font-size:13px;color:#555;font-weight:400;-webkit-text-stroke:0.2px #555;transform:scaleX(0.94);transform-origin:right 50%;">0.32</div>
<div class="r" style="left:1664.00px;top:343.49px;width:77.30px;height:18.50px;background:#464b6e;border-radius:9.5px;box-sizing:border-box;border-top:1px solid #2f3560;"></div>
<div class="t" style="left:1402.60px;width:600px;text-align:center;top:343.92px;font-size:10.3px;color:#fff;font-weight:700;letter-spacing:0.9px;">SPARK</div>
<div class="r" style="left:305.00px;top:378.32px;width:1459.00px;height:41.33px;background:#fff;box-sizing:border-box;border-bottom:1.4px solid #e6e7eb;"></div>
<div class="r" style="left:305.00px;top:378.32px;width:5.30px;height:41.33px;background:#22c40e;"></div>
<div class="t" style="left:320.40px;top:382.72px;font-size:13px;color:#555;font-weight:400;-webkit-text-stroke:0.2px #555;transform:scaleX(0.94);transform-origin:left 50%;">Success</div>
<div class="t" style="left:415.80px;top:382.72px;font-size:13px;color:#42acd9;font-weight:400;-webkit-text-stroke:0.35px #42acd9;letter-spacing:0.3px;transform:scaleX(0.94);transform-origin:left 50%;">job-668229513737<span style="letter-spacing:-0.5px">...</span></div>
<div class="t" style="left:555.40px;top:382.72px;font-size:13px;color:#555;font-weight:400;-webkit-text-stroke:0.2px #555;transform:scaleX(0.94);transform-origin:left 50%;">Light_Executor_Ev<span style="letter-spacing:-0.5px">...</span></div>
<div class="t" style="left:684.60px;top:382.72px;font-size:13px;color:#555;font-weight:400;-webkit-text-stroke:0.2px #555;transform:scaleX(0.94);transform-origin:left 50%;">AUTOMATED</div>
<div class="t" style="left:816.70px;top:382.72px;font-size:13px;color:#555;font-weight:400;-webkit-text-stroke:0.2px #555;transform:scaleX(0.94);transform-origin:left 50%;">ptholeti@unraveld<span style="letter-spacing:-0.5px">...</span></div>
<div class="t" style="left:945.70px;top:382.72px;font-size:13px;color:#555;font-weight:400;-webkit-text-stroke:0.2px #555;transform:scaleX(0.94);transform-origin:left 50%;">ubs_test_ws1</div>
<div class="t" style="right:602.40px;top:382.72px;font-size:13px;color:#555;font-weight:400;-webkit-text-stroke:0.2px #555;transform:scaleX(0.94);transform-origin:right 50%;">14:48:31</div>
<div class="t" style="right:601.80px;top:397.22px;font-size:13px;color:#555;font-weight:400;letter-spacing:0.63px;-webkit-text-stroke:0.2px #555;transform:scaleX(0.94);transform-origin:right 50%;">07/21/24</div>
<div class="t" style="right:453.60px;top:382.72px;font-size:13px;color:#555;font-weight:400;-webkit-text-stroke:0.2px #555;transform:scaleX(0.94);transform-origin:right 50%;">5m 17s</div>
<div class="t" style="right:318.30px;top:382.72px;font-size:13px;color:#555;font-weight:400;-webkit-text-stroke:0.2px #555;transform:scaleX(0.94);transform-origin:right 50%;">8m 32s</div>
<div class="t" style="right:228.10px;top:382.72px;font-size:13px;color:#555;font-weight:400;-webkit-text-stroke:0.2px #555;transform:scaleX(0.94);transform-origin:right 50%;">$ 0.18</div>
<div class="t" style="right:146.30px;top:382.72px;font-size:13px;color:#555;font-weight:400;-webkit-text-stroke:0.2px #555;transform:scaleX(0.94);transform-origin:right 50%;">0.32</div>
<div class="r" style="left:1664.00px;top:384.82px;width:77.30px;height:18.50px;background:#464b6e;border-radius:9.5px;box-sizing:border-box;border-top:1px solid #2f3560;"></div>
<div class="t" style="left:1402.60px;width:600px;text-align:center;top:385.25px;font-size:10.3px;color:#fff;font-weight:700;letter-spacing:0.9px;">SPARK</div>
<div class="r" style="left:305.00px;top:419.65px;width:1459.00px;height:41.33px;background:#fff;box-sizing:border-box;border-bottom:1.4px solid #e6e7eb;"></div>
<div class="r" style="left:305.00px;top:419.65px;width:5.30px;height:41.33px;background:#22c40e;"></div>
<div class="t" style="left:320.40px;top:424.05px;font-size:13px;color:#555;font-weight:400;-webkit-text-stroke:0.2px #555;transform:scaleX(0.94);transform-origin:left 50%;">Success</div>
<div class="t" style="left:415.80px;top:424.05px;font-size:13px;color:#42acd9;font-weight:400;-webkit-text-stroke:0.35px #42acd9;letter-spacing:0.3px;transform:scaleX(0.94);transform-origin:left 50%;">job-487813729665<span style="letter-spacing:-0.5px">...</span></div>
<div class="t" style="left:555.40px;top:424.05px;font-size:13px;color:#555;font-weight:400;-webkit-text-stroke:0.2px #555;transform:scaleX(0.94);transform-origin:left 50%;">Executor_Imbalan<span style="letter-spacing:-0.5px">...</span></div>
<div class="t" style="left:684.60px;top:424.05px;font-size:13px;color:#555;font-weight:400;-webkit-text-stroke:0.2px #555;transform:scaleX(0.94);transform-origin:left 50%;">AUTOMATED</div>
<div class="t" style="left:816.70px;top:424.05px;font-size:13px;color:#555;font-weight:400;-webkit-text-stroke:0.2px #555;transform:scaleX(0.94);transform-origin:left 50%;">ptholeti@unraveld<span style="letter-spacing:-0.5px">...</span></div>
<div class="t" style="left:945.70px;top:424.05px;font-size:13px;color:#555;font-weight:400;-webkit-text-stroke:0.2px #555;transform:scaleX(0.94);transform-origin:left 50%;">ubs_test_ws1</div>
<div class="t" style="right:602.40px;top:424.05px;font-size:13px;color:#555;font-weight:400;-webkit-text-stroke:0.2px #555;transform:scaleX(0.94);transform-origin:right 50%;">14:48:00</div>
<div class="t" style="right:601.80px;top:438.55px;font-size:13px;color:#555;font-weight:400;letter-spacing:0.63px;-webkit-text-stroke:0.2px #555;transform:scaleX(0.94);transform-origin:right 50%;">07/21/24</div>
<div class="t" style="right:453.60px;top:424.05px;font-size:13px;color:#555;font-weight:400;-webkit-text-stroke:0.2px #555;transform:scaleX(0.94);transform-origin:right 50%;">4m 23s</div>
<div class="t" style="right:318.30px;top:424.05px;font-size:13px;color:#555;font-weight:400;-webkit-text-stroke:0.2px #555;transform:scaleX(0.94);transform-origin:right 50%;">7m 47s</div>
<div class="t" style="right:228.10px;top:424.05px;font-size:13px;color:#555;font-weight:400;-webkit-text-stroke:0.2px #555;transform:scaleX(0.94);transform-origin:right 50%;">$ 0.16</div>
<div class="t" style="right:146.30px;top:424.05px;font-size:13px;color:#555;font-weight:400;-webkit-text-stroke:0.2px #555;transform:scaleX(0.94);transform-origin:right 50%;">0.29</div>
<div class="r" style="left:1664.00px;top:426.15px;width:77.30px;height:18.50px;background:#464b6e;border-radius:9.5px;box-sizing:border-box;border-top:1px solid #2f3560;"></div>
<div class="t" style="left:1402.60px;width:600px;text-align:center;top:426.58px;font-size:10.3px;color:#fff;font-weight:700;letter-spacing:0.9px;">SPARK</div>
<div class="r" style="left:305.00px;top:460.98px;width:1459.00px;height:41.33px;background:#fff;box-sizing:border-box;border-bottom:1.4px solid #e6e7eb;"></div>
<div class="r" style="left:305.00px;top:460.98px;width:5.30px;height:41.33px;background:#22c40e;"></div>
<div class="t" style="left:320.40px;top:465.38px;font-size:13px;color:#555;font-weight:400;-webkit-text-stroke:0.2px #555;transform:scaleX(0.94);transform-origin:left 50%;">Success</div>
<div class="t" style="left:415.80px;top:465.38px;font-size:13px;color:#42acd9;font-weight:400;-webkit-text-stroke:0.35px #42acd9;letter-spacing:0.3px;transform:scaleX(0.94);transform-origin:left 50%;">job-400924599189<span style="letter-spacing:-0.5px">...</span></div>
<div class="t" style="left:555.40px;top:465.38px;font-size:13px;color:#555;font-weight:400;-webkit-text-stroke:0.2px #555;transform:scaleX(0.94);transform-origin:left 50%;">PartitionNotPrune<span style="letter-spacing:-0.5px">...</span></div>
<div class="t" style="left:684.60px;top:465.38px;font-size:13px;color:#555;font-weight:400;-webkit-text-stroke:0.2px #555;transform:scaleX(0.94);transform-origin:left 50%;">AUTOMATED</div>
<div class="t" style="left:816.70px;top:465.38px;font-size:13px;color:#555;font-weight:400;-webkit-text-stroke:0.2px #555;transform:scaleX(0.94);transform-origin:left 50%;">pbadiganti@unrav<span style="letter-spacing:-0.5px">...</span></div>
<div class="t" style="left:945.70px;top:465.38px;font-size:13px;color:#555;font-weight:400;-webkit-text-stroke:0.2px #555;transform:scaleX(0.94);transform-origin:left 50%;">prakash_ubs_test</div>
<div class="t" style="right:602.40px;top:465.38px;font-size:13px;color:#555;font-weight:400;-webkit-text-stroke:0.2px #555;transform:scaleX(0.94);transform-origin:right 50%;">14:46:43</div>
<div class="t" style="right:601.80px;top:479.88px;font-size:13px;color:#555;font-weight:400;letter-spacing:0.63px;-webkit-text-stroke:0.2px #555;transform:scaleX(0.94);transform-origin:right 50%;">07/21/24</div>
<div class="t" style="right:453.60px;top:465.38px;font-size:13px;color:#555;font-weight:400;-webkit-text-stroke:0.2px #555;transform:scaleX(0.94);transform-origin:right 50%;">3m 42s</div>
<div class="t" style="right:318.30px;top:465.38px;font-size:13px;color:#555;font-weight:400;-webkit-text-stroke:0.2px #555;transform:scaleX(0.94);transform-origin:right 50%;">35s</div>
<div class="t" style="right:228.10px;top:465.38px;font-size:13px;color:#555;font-weight:400;-webkit-text-stroke:0.2px #555;transform:scaleX(0.94);transform-origin:right 50%;">$ 0.01</div>
<div class="t" style="right:146.30px;top:465.38px;font-size:13px;color:#555;font-weight:400;-webkit-text-stroke:0.2px #555;transform:scaleX(0.94);transform-origin:right 50%;">0.02</div>
<div class="r" style="left:1664.00px;top:467.48px;width:77.30px;height:18.50px;background:#464b6e;border-radius:9.5px;box-sizing:border-box;border-top:1px solid #2f3560;"></div>
<div class="t" style="left:1402.60px;width:600px;text-align:center;top:467.91px;font-size:10.3px;color:#fff;font-weight:700;letter-spacing:0.9px;">SPARK</div>
<div class="r" style="left:305.00px;top:502.31px;width:1459.00px;height:41.33px;background:#fff;box-sizing:border-box;border-bottom:1.4px solid #e6e7eb;"></div>
<div class="r" style="left:305.00px;top:502.31px;width:5.30px;height:41.33px;background:#22c40e;"></div>
<div class="t" style="left:320.40px;top:506.71px;font-size:13px;color:#555;font-weight:400;-webkit-text-stroke:0.2px #555;transform:scaleX(0.94);transform-origin:left 50%;">Success</div>
<div class="t" style="left:415.80px;top:506.71px;font-size:13px;color:#42acd9;font-weight:400;-webkit-text-stroke:0.35px #42acd9;letter-spacing:0.3px;transform:scaleX(0.94);transform-origin:left 50%;">job-270632870398<span style="letter-spacing:-0.5px">...</span></div>
<div class="t" style="left:555.40px;top:506.71px;font-size:13px;color:#555;font-weight:400;-webkit-text-stroke:0.2px #555;transform:scaleX(0.94);transform-origin:left 50%;">PartitionNotPrune<span style="letter-spacing:-0.5px">...</span></div>
<div class="t" style="left:684.60px;top:506.71px;font-size:13px;color:#555;font-weight:400;-webkit-text-stroke:0.2px #555;transform:scaleX(0.94);transform-origin:left 50%;">AUTOMATED</div>
<div class="t" style="left:816.70px;top:506.71px;font-size:13px;color:#555;font-weight:400;-webkit-text-stroke:0.2px #555;transform:scaleX(0.94);transform-origin:left 50%;">ptholeti@unraveld<span style="letter-spacing:-0.5px">...</span></div>
<div class="t" style="left:945.70px;top:506.71px;font-size:13px;color:#555;font-weight:400;-webkit-text-stroke:0.2px #555;transform:scaleX(0.94);transform-origin:left 50%;">ubs_test_ws1</div>
<div class="t" style="right:602.40px;top:506.71px;font-size:13px;color:#555;font-weight:400;-webkit-text-stroke:0.2px #555;transform:scaleX(0.94);transform-origin:right 50%;">14:45:23</div>
<div class="t" style="right:601.80px;top:521.21px;font-size:13px;color:#555;font-weight:400;letter-spacing:0.63px;-webkit-text-stroke:0.2px #555;transform:scaleX(0.94);transform-origin:right 50%;">07/21/24</div>
<div class="t" style="right:453.60px;top:506.71px;font-size:13px;color:#555;font-weight:400;-webkit-text-stroke:0.2px #555;transform:scaleX(0.94);transform-origin:right 50%;">2m 38s</div>
<div class="t" style="right:318.30px;top:506.71px;font-size:13px;color:#555;font-weight:400;-webkit-text-stroke:0.2px #555;transform:scaleX(0.94);transform-origin:right 50%;">32s</div>
<div class="t" style="right:228.10px;top:506.71px;font-size:13px;color:#555;font-weight:400;-webkit-text-stroke:0.2px #555;transform:scaleX(0.94);transform-origin:right 50%;">$ 0.01</div>
<div class="t" style="right:146.30px;top:506.71px;font-size:13px;color:#555;font-weight:400;-webkit-text-stroke:0.2px #555;transform:scaleX(0.94);transform-origin:right 50%;">0.02</div>
<div class="r" style="left:1664.00px;top:508.81px;width:77.30px;height:18.50px;background:#464b6e;border-radius:9.5px;box-sizing:border-box;border-top:1px solid #2f3560;"></div>
<div class="t" style="left:1402.60px;width:600px;text-align:center;top:509.24px;font-size:10.3px;color:#fff;font-weight:700;letter-spacing:0.9px;">SPARK</div>
<div class="r" style="left:305.00px;top:543.64px;width:1459.00px;height:41.33px;background:#fff;box-sizing:border-box;border-bottom:1.4px solid #e6e7eb;"></div>
<div class="r" style="left:305.00px;top:543.64px;width:5.30px;height:41.33px;background:#22c40e;"></div>
<div class="t" style="left:320.40px;top:548.04px;font-size:13px;color:#555;font-weight:400;-webkit-text-stroke:0.2px #555;transform:scaleX(0.94);transform-origin:left 50%;">Success</div>
<div class="t" style="left:415.80px;top:548.04px;font-size:13px;color:#42acd9;font-weight:400;-webkit-text-stroke:0.35px #42acd9;letter-spacing:0.3px;transform:scaleX(0.94);transform-origin:left 50%;">HighIOEvent-cluster</div>
<div class="t" style="left:555.40px;top:548.04px;font-size:13px;color:#555;font-weight:400;-webkit-text-stroke:0.2px #555;transform:scaleX(0.94);transform-origin:left 50%;">-</div>
<div class="t" style="left:684.60px;top:548.04px;font-size:13px;color:#555;font-weight:400;-webkit-text-stroke:0.2px #555;transform:scaleX(0.94);transform-origin:left 50%;">INTERACTIVE</div>
<div class="t" style="left:816.70px;top:548.04px;font-size:13px;color:#555;font-weight:400;-webkit-text-stroke:0.2px #555;transform:scaleX(0.94);transform-origin:left 50%;">ptholeti@unraveld<span style="letter-spacing:-0.5px">...</span></div>
<div class="t" style="left:945.70px;top:548.04px;font-size:13px;color:#555;font-weight:400;-webkit-text-stroke:0.2px #555;transform:scaleX(0.94);transform-origin:left 50%;">ubs_test_ws1</div>
<div class="t" style="right:602.40px;top:548.04px;font-size:13px;color:#555;font-weight:400;-webkit-text-stroke:0.2px #555;transform:scaleX(0.94);transform-origin:right 50%;">14:38:14</div>
<div class="t" style="right:601.80px;top:562.54px;font-size:13px;color:#555;font-weight:400;letter-spacing:0.63px;-webkit-text-stroke:0.2px #555;transform:scaleX(0.94);transform-origin:right 50%;">07/21/24</div>
<div class="t" style="right:453.60px;top:548.04px;font-size:13px;color:#555;font-weight:400;-webkit-text-stroke:0.2px #555;transform:scaleX(0.94);transform-origin:right 50%;">6m 8s</div>
<div class="t" style="right:318.30px;top:548.04px;font-size:13px;color:#555;font-weight:400;-webkit-text-stroke:0.2px #555;transform:scaleX(0.94);transform-origin:right 50%;">15m 10s</div>
<div class="t" style="right:228.10px;top:548.04px;font-size:13px;color:#555;font-weight:400;-webkit-text-stroke:0.2px #555;transform:scaleX(0.94);transform-origin:right 50%;">$ 0.7</div>
<div class="t" style="right:146.30px;top:548.04px;font-size:13px;color:#555;font-weight:400;-webkit-text-stroke:0.2px #555;transform:scaleX(0.94);transform-origin:right 50%;">0.89</div>
<div class="r" style="left:1664.00px;top:550.14px;width:77.30px;height:18.50px;background:#464b6e;border-radius:9.5px;box-sizing:border-box;border-top:1px solid #2f3560;"></div>
<div class="t" style="left:1402.60px;width:600px;text-align:center;top:550.57px;font-size:10.3px;color:#fff;font-weight:700;letter-spacing:0.9px;">SPARK</div>
<div class="r" style="left:305.00px;top:584.97px;width:1459.00px;height:41.33px;background:#fff;box-sizing:border-box;border-bottom:1.4px solid #e6e7eb;"></div>
<div class="r" style="left:305.00px;top:584.97px;width:5.30px;height:41.33px;background:#22c40e;"></div>
<div class="t" style="left:320.40px;top:589.37px;font-size:13px;color:#555;font-weight:400;-webkit-text-stroke:0.2px #555;transform:scaleX(0.94);transform-origin:left 50%;">Success</div>
<div class="t" style="left:415.80px;top:589.37px;font-size:13px;color:#42acd9;font-weight:400;-webkit-text-stroke:0.35px #42acd9;letter-spacing:0.3px;transform:scaleX(0.94);transform-origin:left 50%;">HighIOEvent-cluster</div>
<div class="t" style="left:555.40px;top:589.37px;font-size:13px;color:#555;font-weight:400;-webkit-text-stroke:0.2px #555;transform:scaleX(0.94);transform-origin:left 50%;">-</div>
<div class="t" style="left:684.60px;top:589.37px;font-size:13px;color:#555;font-weight:400;-webkit-text-stroke:0.2px #555;transform:scaleX(0.94);transform-origin:left 50%;">INTERACTIVE</div>
<div class="t" style="left:816.70px;top:589.37px;font-size:13px;color:#555;font-weight:400;-webkit-text-stroke:0.2px #555;transform:scaleX(0.94);transform-origin:left 50%;">pbadiganti@unrav<span style="letter-spacing:-0.5px">...</span></div>
<div class="t" style="left:945.70px;top:589.37px;font-size:13px;color:#555;font-weight:400;-webkit-text-stroke:0.2px #555;transform:scaleX(0.94);transform-origin:left 50%;">prakash_ubs_test</div>
<div class="t" style="right:602.40px;top:589.37px;font-size:13px;color:#555;font-weight:400;-webkit-text-stroke:0.2px #555;transform:scaleX(0.94);transform-origin:right 50%;">14:37:35</div>
<div class="t" style="right:601.80px;top:603.87px;font-size:13px;color:#555;font-weight:400;letter-spacing:0.63px;-webkit-text-stroke:0.2px #555;transform:scaleX(0.94);transform-origin:right 50%;">07/21/24</div>
<div class="t" style="right:453.60px;top:589.37px;font-size:13px;color:#555;font-weight:400;-webkit-text-stroke:0.2px #555;transform:scaleX(0.94);transform-origin:right 50%;">5m 12s</div>
<div class="t" style="right:318.30px;top:589.37px;font-size:13px;color:#555;font-weight:400;-webkit-text-stroke:0.2px #555;transform:scaleX(0.94);transform-origin:right 50%;">15m 17s</div>
<div class="t" style="right:228.10px;top:589.37px;font-size:13px;color:#555;font-weight:400;-webkit-text-stroke:0.2px #555;transform:scaleX(0.94);transform-origin:right 50%;">$ 0.71</div>
<div class="t" style="right:146.30px;top:589.37px;font-size:13px;color:#555;font-weight:400;-webkit-text-stroke:0.2px #555;transform:scaleX(0.94);transform-origin:right 50%;">0.90</div>
<div class="r" style="left:1664.00px;top:591.47px;width:77.30px;height:18.50px;background:#464b6e;border-radius:9.5px;box-sizing:border-box;border-top:1px solid #2f3560;"></div>
<div class="t" style="left:1402.60px;width:600px;text-align:center;top:591.90px;font-size:10.3px;color:#fff;font-weight:700;letter-spacing:0.9px;">SPARK</div>
<div class="r" style="left:305.00px;top:626.30px;width:1459.00px;height:41.33px;background:#fff;box-sizing:border-box;border-bottom:1.4px solid #e6e7eb;"></div>
<div class="r" style="left:305.00px;top:626.30px;width:5.30px;height:41.33px;background:#22c40e;"></div>
<div class="t" style="left:320.40px;top:630.70px;font-size:13px;color:#555;font-weight:400;-webkit-text-stroke:0.2px #555;transform:scaleX(0.94);transform-origin:left 50%;">Success</div>
<div class="t" style="left:415.80px;top:630.70px;font-size:13px;color:#42acd9;font-weight:400;-webkit-text-stroke:0.35px #42acd9;letter-spacing:0.3px;transform:scaleX(0.94);transform-origin:left 50%;">GarbageCollection-<span style="letter-spacing:-0.5px">...</span></div>
<div class="t" style="left:555.40px;top:630.70px;font-size:13px;color:#555;font-weight:400;-webkit-text-stroke:0.2px #555;transform:scaleX(0.94);transform-origin:left 50%;">-</div>
<div class="t" style="left:684.60px;top:630.70px;font-size:13px;color:#555;font-weight:400;-webkit-text-stroke:0.2px #555;transform:scaleX(0.94);transform-origin:left 50%;">INTERACTIVE</div>
<div class="t" style="left:816.70px;top:630.70px;font-size:13px;color:#555;font-weight:400;-webkit-text-stroke:0.2px #555;transform:scaleX(0.94);transform-origin:left 50%;">pbadiganti@unrav<span style="letter-spacing:-0.5px">...</span></div>
<div class="t" style="left:945.70px;top:630.70px;font-size:13px;color:#555;font-weight:400;-webkit-text-stroke:0.2px #555;transform:scaleX(0.94);transform-origin:left 50%;">prakash_ubs_test</div>
<div class="t" style="right:602.40px;top:630.70px;font-size:13px;color:#555;font-weight:400;-webkit-text-stroke:0.2px #555;transform:scaleX(0.94);transform-origin:right 50%;">14:37:20</div>
<div class="t" style="right:601.80px;top:645.20px;font-size:13px;color:#555;font-weight:400;letter-spacing:0.63px;-webkit-text-stroke:0.2px #555;transform:scaleX(0.94);transform-origin:right 50%;">07/21/24</div>
<div class="t" style="right:453.60px;top:630.70px;font-size:13px;color:#555;font-weight:400;-webkit-text-stroke:0.2px #555;transform:scaleX(0.94);transform-origin:right 50%;">5m 21s</div>
<div class="t" style="right:318.30px;top:630.70px;font-size:13px;color:#555;font-weight:400;-webkit-text-stroke:0.2px #555;transform:scaleX(0.94);transform-origin:right 50%;">1h 52m 31s</div>
<div class="t" style="right:228.10px;top:630.70px;font-size:13px;color:#555;font-weight:400;-webkit-text-stroke:0.2px #555;transform:scaleX(0.94);transform-origin:right 50%;">$ 3.34</div>
<div class="t" style="right:146.30px;top:630.70px;font-size:13px;color:#555;font-weight:400;-webkit-text-stroke:0.2px #555;transform:scaleX(0.94);transform-origin:right 50%;">4.22</div>
<div class="r" style="left:1664.00px;top:632.80px;width:77.30px;height:18.50px;background:#464b6e;border-radius:9.5px;box-sizing:border-box;border-top:1px solid #2f3560;"></div>
<div class="t" style="left:1402.60px;width:600px;text-align:center;top:633.23px;font-size:10.3px;color:#fff;font-weight:700;letter-spacing:0.9px;">SPARK</div>
<div class="r" style="left:305.00px;top:667.63px;width:1459.00px;height:41.33px;background:#fff;box-sizing:border-box;border-bottom:1.4px solid #e6e7eb;"></div>
<div class="r" style="left:305.00px;top:667.63px;width:5.30px;height:41.33px;background:#22c40e;"></div>
<div class="t" style="left:320.40px;top:672.03px;font-size:13px;color:#555;font-weight:400;-webkit-text-stroke:0.2px #555;transform:scaleX(0.94);transform-origin:left 50%;">Success</div>
<div class="t" style="left:415.80px;top:672.03px;font-size:13px;color:#42acd9;font-weight:400;-webkit-text-stroke:0.35px #42acd9;letter-spacing:0.3px;transform:scaleX(0.94);transform-origin:left 50%;">job-108980184113<span style="letter-spacing:-0.5px">...</span></div>
<div class="t" style="left:555.40px;top:672.03px;font-size:13px;color:#555;font-weight:400;-webkit-text-stroke:0.2px #555;transform:scaleX(0.94);transform-origin:left 50%;">Inefficient_JoinCo<span style="letter-spacing:-0.5px">...</span></div>
<div class="t" style="left:684.60px;top:672.03px;font-size:13px;color:#555;font-weight:400;-webkit-text-stroke:0.2px #555;transform:scaleX(0.94);transform-origin:left 50%;">AUTOMATED</div>
<div class="t" style="left:816.70px;top:672.03px;font-size:13px;color:#555;font-weight:400;-webkit-text-stroke:0.2px #555;transform:scaleX(0.94);transform-origin:left 50%;">pbadiganti@unrav<span style="letter-spacing:-0.5px">...</span></div>
<div class="t" style="left:945.70px;top:672.03px;font-size:13px;color:#555;font-weight:400;-webkit-text-stroke:0.2px #555;transform:scaleX(0.94);transform-origin:left 50%;">prakash_ubs_test</div>
<div class="t" style="right:602.40px;top:672.03px;font-size:13px;color:#555;font-weight:400;-webkit-text-stroke:0.2px #555;transform:scaleX(0.94);transform-origin:right 50%;">14:37:10</div>
<div class="t" style="right:601.80px;top:686.53px;font-size:13px;color:#555;font-weight:400;letter-spacing:0.63px;-webkit-text-stroke:0.2px #555;transform:scaleX(0.94);transform-origin:right 50%;">07/21/24</div>
<div class="t" style="right:453.60px;top:672.03px;font-size:13px;color:#555;font-weight:400;-webkit-text-stroke:0.2px #555;transform:scaleX(0.94);transform-origin:right 50%;">6m 2s</div>
<div class="t" style="right:318.30px;top:672.03px;font-size:13px;color:#555;font-weight:400;-webkit-text-stroke:0.2px #555;transform:scaleX(0.94);transform-origin:right 50%;">14m 47s</div>
<div class="t" style="right:228.10px;top:672.03px;font-size:13px;color:#555;font-weight:400;-webkit-text-stroke:0.2px #555;transform:scaleX(0.94);transform-origin:right 50%;">$ 0.35</div>
<div class="t" style="right:146.30px;top:672.03px;font-size:13px;color:#555;font-weight:400;-webkit-text-stroke:0.2px #555;transform:scaleX(0.94);transform-origin:right 50%;">0.65</div>
<div class="r" style="left:1664.00px;top:674.13px;width:77.30px;height:18.50px;background:#464b6e;border-radius:9.5px;box-sizing:border-box;border-top:1px solid #2f3560;"></div>
<div class="t" style="left:1402.60px;width:600px;text-align:center;top:674.56px;font-size:10.3px;color:#fff;font-weight:700;letter-spacing:0.9px;">SPARK</div>
<div class="r" style="left:305.00px;top:708.96px;width:1459.00px;height:41.33px;background:#fff;box-sizing:border-box;border-bottom:1.4px solid #e6e7eb;"></div>
<div class="r" style="left:305.00px;top:708.96px;width:5.30px;height:41.33px;background:#22c40e;"></div>
<div class="t" style="left:320.40px;top:713.36px;font-size:13px;color:#555;font-weight:400;-webkit-text-stroke:0.2px #555;transform:scaleX(0.94);transform-origin:left 50%;">Success</div>
<div class="t" style="left:415.80px;top:713.36px;font-size:13px;color:#42acd9;font-weight:400;-webkit-text-stroke:0.35px #42acd9;letter-spacing:0.3px;transform:scaleX(0.94);transform-origin:left 50%;">job-943149193950<span style="letter-spacing:-0.5px">...</span></div>
<div class="t" style="left:555.40px;top:713.36px;font-size:13px;color:#555;font-weight:400;-webkit-text-stroke:0.2px #555;transform:scaleX(0.94);transform-origin:left 50%;">Finder_App_Cont<span style="letter-spacing:-0.5px">...</span></div>
<div class="t" style="left:684.60px;top:713.36px;font-size:13px;color:#555;font-weight:400;-webkit-text-stroke:0.2px #555;transform:scaleX(0.94);transform-origin:left 50%;">AUTOMATED</div>
<div class="t" style="left:816.70px;top:713.36px;font-size:13px;color:#555;font-weight:400;-webkit-text-stroke:0.2px #555;transform:scaleX(0.94);transform-origin:left 50%;">pbadiganti@unrav<span style="letter-spacing:-0.5px">...</span></div>
<div class="t" style="left:945.70px;top:713.36px;font-size:13px;color:#555;font-weight:400;-webkit-text-stroke:0.2px #555;transform:scaleX(0.94);transform-origin:left 50%;">prakash_ubs_test</div>
<div class="t" style="right:602.40px;top:713.36px;font-size:13px;color:#555;font-weight:400;-webkit-text-stroke:0.2px #555;transform:scaleX(0.94);transform-origin:right 50%;">14:37:07</div>
<div class="t" style="right:601.80px;top:727.86px;font-size:13px;color:#555;font-weight:400;letter-spacing:0.63px;-webkit-text-stroke:0.2px #555;transform:scaleX(0.94);transform-origin:right 50%;">07/21/24</div>
<div class="t" style="right:453.60px;top:713.36px;font-size:13px;color:#555;font-weight:400;-webkit-text-stroke:0.2px #555;transform:scaleX(0.94);transform-origin:right 50%;">6m 25s</div>
<div class="t" style="right:318.30px;top:713.36px;font-size:13px;color:#555;font-weight:400;-webkit-text-stroke:0.2px #555;transform:scaleX(0.94);transform-origin:right 50%;">53m 27s</div>
<div class="t" style="right:228.10px;top:713.36px;font-size:13px;color:#555;font-weight:400;-webkit-text-stroke:0.2px #555;transform:scaleX(0.94);transform-origin:right 50%;">$ 1.08</div>
<div class="t" style="right:146.30px;top:713.36px;font-size:13px;color:#555;font-weight:400;-webkit-text-stroke:0.2px #555;transform:scaleX(0.94);transform-origin:right 50%;">2.00</div>
<div class="r" style="left:1664.00px;top:715.46px;width:77.30px;height:18.50px;background:#464b6e;border-radius:9.5px;box-sizing:border-box;border-top:1px solid #2f3560;"></div>
<div class="t" style="left:1402.60px;width:600px;text-align:center;top:715.89px;font-size:10.3px;color:#fff;font-weight:700;letter-spacing:0.9px;">SPARK</div>
<div class="r" style="left:305.00px;top:750.29px;width:1459.00px;height:41.33px;background:#fff;box-sizing:border-box;border-bottom:1.4px solid #e6e7eb;"></div>
<div class="r" style="left:305.00px;top:750.29px;width:5.30px;height:41.33px;background:#22c40e;"></div>
<div class="t" style="left:320.40px;top:754.69px;font-size:13px;color:#555;font-weight:400;-webkit-text-stroke:0.2px #555;transform:scaleX(0.94);transform-origin:left 50%;">Success</div>
<div class="t" style="left:415.80px;top:754.69px;font-size:13px;color:#42acd9;font-weight:400;-webkit-text-stroke:0.35px #42acd9;letter-spacing:0.3px;transform:scaleX(0.94);transform-origin:left 50%;">job-638303611165<span style="letter-spacing:-0.5px">...</span></div>
<div class="t" style="left:555.40px;top:754.69px;font-size:13px;color:#555;font-weight:400;-webkit-text-stroke:0.2px #555;transform:scaleX(0.94);transform-origin:left 50%;">DataSkew_EventG<span style="letter-spacing:-0.5px">...</span></div>
<div class="t" style="left:684.60px;top:754.69px;font-size:13px;color:#555;font-weight:400;-webkit-text-stroke:0.2px #555;transform:scaleX(0.94);transform-origin:left 50%;">AUTOMATED</div>
<div class="t" style="left:816.70px;top:754.69px;font-size:13px;color:#555;font-weight:400;-webkit-text-stroke:0.2px #555;transform:scaleX(0.94);transform-origin:left 50%;">pbadiganti@unrav<span style="letter-spacing:-0.5px">...</span></div>
<div class="t" style="left:945.70px;top:754.69px;font-size:13px;color:#555;font-weight:400;-webkit-text-stroke:0.2px #555;transform:scaleX(0.94);transform-origin:left 50%;">prakash_ubs_test</div>
<div class="t" style="right:602.40px;top:754.69px;font-size:13px;color:#555;font-weight:400;-webkit-text-stroke:0.2px #555;transform:scaleX(0.94);transform-origin:right 50%;">14:36:45</div>
<div class="t" style="right:601.80px;top:769.19px;font-size:13px;color:#555;font-weight:400;letter-spacing:0.63px;-webkit-text-stroke:0.2px #555;transform:scaleX(0.94);transform-origin:right 50%;">07/21/24</div>
<div class="t" style="right:453.60px;top:754.69px;font-size:13px;color:#555;font-weight:400;-webkit-text-stroke:0.2px #555;transform:scaleX(0.94);transform-origin:right 50%;">5m 15s</div>
<div class="t" style="right:318.30px;top:754.69px;font-size:13px;color:#555;font-weight:400;-webkit-text-stroke:0.2px #555;transform:scaleX(0.94);transform-origin:right 50%;">6m 29s</div>
<div class="t" style="right:228.10px;top:754.69px;font-size:13px;color:#555;font-weight:400;-webkit-text-stroke:0.2px #555;transform:scaleX(0.94);transform-origin:right 50%;">$ 0.13</div>
<div class="t" style="right:146.30px;top:754.69px;font-size:13px;color:#555;font-weight:400;-webkit-text-stroke:0.2px #555;transform:scaleX(0.94);transform-origin:right 50%;">0.24</div>
<div class="r" style="left:1664.00px;top:756.79px;width:77.30px;height:18.50px;background:#464b6e;border-radius:9.5px;box-sizing:border-box;border-top:1px solid #2f3560;"></div>
<div class="t" style="left:1402.60px;width:600px;text-align:center;top:757.22px;font-size:10.3px;color:#fff;font-weight:700;letter-spacing:0.9px;">SPARK</div>
<div class="r" style="left:305.00px;top:791.62px;width:1459.00px;height:41.33px;background:#fff;box-sizing:border-box;border-bottom:1.4px solid #e6e7eb;"></div>
<div class="r" style="left:305.00px;top:791.62px;width:5.30px;height:41.33px;background:#22c40e;"></div>
<div class="t" style="left:320.40px;top:796.02px;font-size:13px;color:#555;font-weight:400;-webkit-text-stroke:0.2px #555;transform:scaleX(0.94);transform-origin:left 50%;">Success</div>
<div class="t" style="left:415.80px;top:796.02px;font-size:13px;color:#42acd9;font-weight:400;-webkit-text-stroke:0.35px #42acd9;letter-spacing:0.3px;transform:scaleX(0.94);transform-origin:left 50%;">job-106734615967<span style="letter-spacing:-0.5px">...</span></div>
<div class="t" style="left:555.40px;top:796.02px;font-size:13px;color:#555;font-weight:400;-webkit-text-stroke:0.2px #555;transform:scaleX(0.94);transform-origin:left 50%;">Inefficient_JoinCo<span style="letter-spacing:-0.5px">...</span></div>
<div class="t" style="left:684.60px;top:796.02px;font-size:13px;color:#555;font-weight:400;-webkit-text-stroke:0.2px #555;transform:scaleX(0.94);transform-origin:left 50%;">AUTOMATED</div>
<div class="t" style="left:816.70px;top:796.02px;font-size:13px;color:#555;font-weight:400;-webkit-text-stroke:0.2px #555;transform:scaleX(0.94);transform-origin:left 50%;">ptholeti@unraveld<span style="letter-spacing:-0.5px">...</span></div>
<div class="t" style="left:945.70px;top:796.02px;font-size:13px;color:#555;font-weight:400;-webkit-text-stroke:0.2px #555;transform:scaleX(0.94);transform-origin:left 50%;">ubs_test_ws1</div>
<div class="t" style="right:602.40px;top:796.02px;font-size:13px;color:#555;font-weight:400;-webkit-text-stroke:0.2px #555;transform:scaleX(0.94);transform-origin:right 50%;">14:36:34</div>
<div class="t" style="right:601.80px;top:810.52px;font-size:13px;color:#555;font-weight:400;letter-spacing:0.63px;-webkit-text-stroke:0.2px #555;transform:scaleX(0.94);transform-origin:right 50%;">07/21/24</div>
<div class="t" style="right:453.60px;top:796.02px;font-size:13px;color:#555;font-weight:400;-webkit-text-stroke:0.2px #555;transform:scaleX(0.94);transform-origin:right 50%;">5m 44s</div>
<div class="t" style="right:318.30px;top:796.02px;font-size:13px;color:#555;font-weight:400;-webkit-text-stroke:0.2px #555;transform:scaleX(0.94);transform-origin:right 50%;">13m 44s</div>
<div class="t" style="right:228.10px;top:796.02px;font-size:13px;color:#555;font-weight:400;-webkit-text-stroke:0.2px #555;transform:scaleX(0.94);transform-origin:right 50%;">$ 0.28</div>
<div class="t" style="right:146.30px;top:796.02px;font-size:13px;color:#555;font-weight:400;-webkit-text-stroke:0.2px #555;transform:scaleX(0.94);transform-origin:right 50%;">0.52</div>
<div class="r" style="left:1664.00px;top:798.12px;width:77.30px;height:18.50px;background:#464b6e;border-radius:9.5px;box-sizing:border-box;border-top:1px solid #2f3560;"></div>
<div class="t" style="left:1402.60px;width:600px;text-align:center;top:798.55px;font-size:10.3px;color:#fff;font-weight:700;letter-spacing:0.9px;">SPARK</div>
<div class="r" style="left:305.00px;top:832.95px;width:1459.00px;height:41.33px;background:#fff;box-sizing:border-box;border-bottom:1.4px solid #e6e7eb;"></div>
<div class="r" style="left:305.00px;top:832.95px;width:5.30px;height:41.33px;background:#22c40e;"></div>
<div class="t" style="left:320.40px;top:837.35px;font-size:13px;color:#555;font-weight:400;-webkit-text-stroke:0.2px #555;transform:scaleX(0.94);transform-origin:left 50%;">Success</div>
<div class="t" style="left:415.80px;top:837.35px;font-size:13px;color:#42acd9;font-weight:400;-webkit-text-stroke:0.35px #42acd9;letter-spacing:0.3px;transform:scaleX(0.94);transform-origin:left 50%;">job-400021928178<span style="letter-spacing:-0.5px">...</span></div>
<div class="t" style="left:555.40px;top:837.35px;font-size:13px;color:#555;font-weight:400;-webkit-text-stroke:0.2px #555;transform:scaleX(0.94);transform-origin:left 50%;">DataSkew_EventG<span style="letter-spacing:-0.5px">...</span></div>
<div class="t" style="left:684.60px;top:837.35px;font-size:13px;color:#555;font-weight:400;-webkit-text-stroke:0.2px #555;transform:scaleX(0.94);transform-origin:left 50%;">AUTOMATED</div>
<div class="t" style="left:816.70px;top:837.35px;font-size:13px;color:#555;font-weight:400;-webkit-text-stroke:0.2px #555;transform:scaleX(0.94);transform-origin:left 50%;">ptholeti@unraveld<span style="letter-spacing:-0.5px">...</span></div>
<div class="t" style="left:945.70px;top:837.35px;font-size:13px;color:#555;font-weight:400;-webkit-text-stroke:0.2px #555;transform:scaleX(0.94);transform-origin:left 50%;">ubs_test_ws1</div>
<div class="t" style="right:602.40px;top:837.35px;font-size:13px;color:#555;font-weight:400;-webkit-text-stroke:0.2px #555;transform:scaleX(0.94);transform-origin:right 50%;">14:36:34</div>
<div class="t" style="right:601.80px;top:851.85px;font-size:13px;color:#555;font-weight:400;letter-spacing:0.63px;-webkit-text-stroke:0.2px #555;transform:scaleX(0.94);transform-origin:right 50%;">07/21/24</div>
<div class="t" style="right:453.60px;top:837.35px;font-size:13px;color:#555;font-weight:400;-webkit-text-stroke:0.2px #555;transform:scaleX(0.94);transform-origin:right 50%;">5m 16s</div>
<div class="t" style="right:318.30px;top:837.35px;font-size:13px;color:#555;font-weight:400;-webkit-text-stroke:0.2px #555;transform:scaleX(0.94);transform-origin:right 50%;">5m 18s</div>
<div class="t" style="right:228.10px;top:837.35px;font-size:13px;color:#555;font-weight:400;-webkit-text-stroke:0.2px #555;transform:scaleX(0.94);transform-origin:right 50%;">$ 0.11</div>
<div class="t" style="right:146.30px;top:837.35px;font-size:13px;color:#555;font-weight:400;-webkit-text-stroke:0.2px #555;transform:scaleX(0.94);transform-origin:right 50%;">0.20</div>
<div class="r" style="left:1664.00px;top:839.45px;width:77.30px;height:18.50px;background:#464b6e;border-radius:9.5px;box-sizing:border-box;border-top:1px solid #2f3560;"></div>
<div class="t" style="left:1402.60px;width:600px;text-align:center;top:839.88px;font-size:10.3px;color:#fff;font-weight:700;letter-spacing:0.9px;">SPARK</div>
<div class="r" style="left:305.00px;top:874.28px;width:1459.00px;height:5.72px;background:#fff;"></div>
<div class="r" style="left:305.00px;top:874.28px;width:5.30px;height:5.72px;background:#22c40e;"></div>
<div class="r" style="left:1664.00px;top:880.78px;width:77.30px;height:18.50px;background:#464b6e;border-radius:9.5px;box-sizing:border-box;border-top:1px solid #2f3560;"></div>
<div class="r" style="left:0.00px;top:0.00px;width:12.00px;height:11.00px;background:#fff;"></div>
<div class="r" style="left:0.00px;top:0.00px;width:8.80px;height:8.00px;background:#1c70e2;"></div>
<div class="r" style="left:881.90px;top:0.00px;width:26.10px;height:11.50px;background:#fff;"></div>
<div class="r" style="left:885.00px;top:0.00px;width:19.80px;height:8.20px;background:#1e74e4;"></div>
<div class="r" style="left:0.00px;top:444.20px;width:12.30px;height:26.10px;background:#fff;box-shadow:0 0 0 0.6px #c9dcf7;"></div>
<div class="r" style="left:0.00px;top:447.90px;width:9.10px;height:19.90px;background:#1c70e2;"></div>
</body></html>
